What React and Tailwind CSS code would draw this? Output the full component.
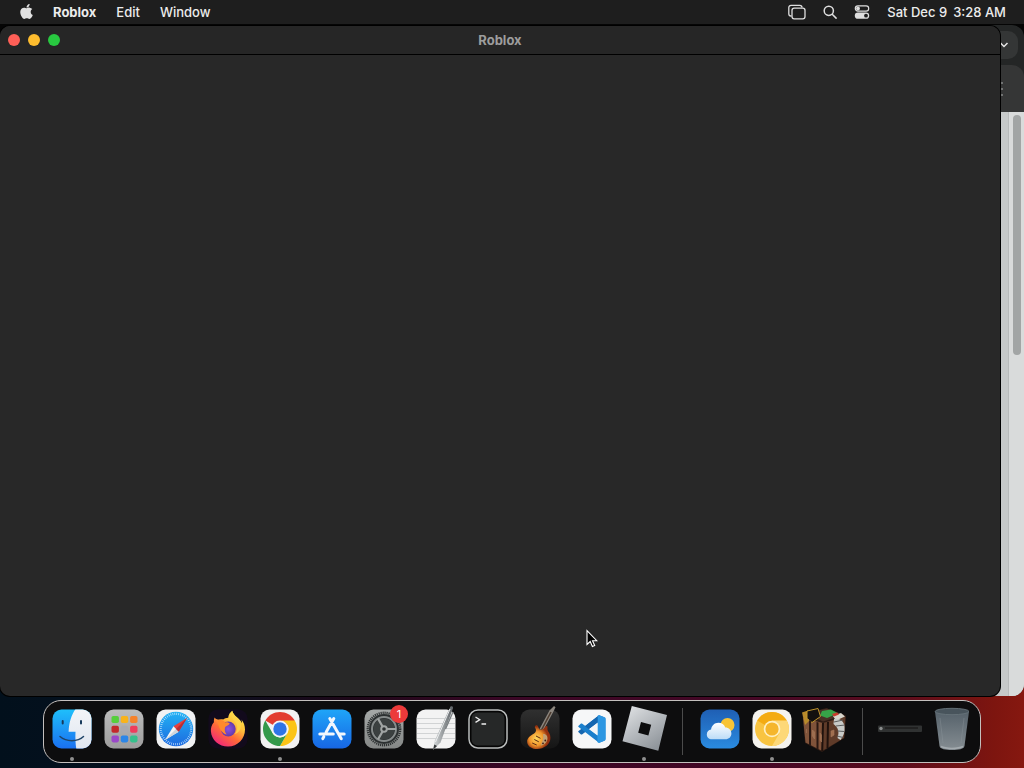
import React from "react";
import { FaApple } from "react-icons/fa";

function Glyph({ children }) {
  return (
    <svg viewBox="0 0 40 40" className="block size-10 overflow-visible" aria-hidden="true">
      {children}
    </svg>
  );
}

const Tile = ({ fill, ...rest }) => <rect x="0.5" y="0.5" width="39" height="39" rx="9" fill={fill} {...rest} />;

function Gradient({ id, from, to, x2 = 0, y2 = 1 }) {
  return (
    <linearGradient id={id} x1="0" y1="0" x2={x2} y2={y2}>
      <stop offset="0" stopColor={from} />
      <stop offset="1" stopColor={to} />
    </linearGradient>
  );
}

function FinderIcon() {
  return (
    <Glyph>
      <defs>
        <Gradient id="finder-l" from="#1fc0fb" to="#1a6ff0" />
        <Gradient id="finder-r" from="#f3f5f8" to="#dfe6f0" />
        <clipPath id="finder-c"><rect x="0.5" y="0.5" width="39" height="39" rx="9" /></clipPath>
      </defs>
      <g clipPath="url(#finder-c)">
        <rect width="40" height="40" fill="url(#finder-l)" />
        <path d="M23.500 0C19.500 6 17 13 16.600 22.800h6.900c-.3 6 0 12 .8 17.200H40V0Z" fill="url(#finder-r)" />
      </g>
      <path d="M10.700 12v2.600M29 12v2.600" stroke="#173a5c" strokeWidth="2" strokeLinecap="round" />
      <path d="M8 27.500c6.500 5.500 17.500 5.500 23.500 0" stroke="#1f4468" strokeWidth="1.500" fill="none" strokeLinecap="round" />
    </Glyph>
  );
}

const launchpadColors = ["#55cf3c", "#f8b31c", "#f5822a", "#c3282c", "#a9a9ae", "#ee3d5c", "#9a48c8", "#2b86e8", "#35c08c"];

function LaunchpadIcon() {
  return (
    <Glyph>
      <defs><Gradient id="lp" from="#bcbcbc" to="#9d9d9d" /></defs>
      <Tile fill="url(#lp)" />
      {launchpadColors.map((color, i) => (
        <rect key={color} x={7.500 + (i % 3) * 9.300} y={7 + Math.floor(i / 3) * 9.700} width="7.400" height="7" rx="1.800" fill={color} />
      ))}
    </Glyph>
  );
}

function SafariIcon() {
  return (
    <Glyph>
      <defs><Gradient id="saf" from="#22b2f4" to="#1d6ae0" /></defs>
      <Tile fill="#f1f2f3" />
      <circle cx="20" cy="20" r="17.200" fill="url(#saf)" />
      <circle cx="20" cy="20" r="15.200" fill="none" stroke="#d8efff" strokeWidth="2.200" strokeDasharray="0.6 1.390" />
      <path d="M31 9 17.500 17.300l5.200 5.400Z" fill="#e8403c" />
      <path d="M9 31 17.500 17.300l5.200 5.400Z" fill="#f5f5f5" />
      <path d="m9 31 11-11 2.700 2.700Z" fill="#cfd6dc" />
      <path d="m31 9-11 11 2.700 2.700Z" fill="#b92e34" />
    </Glyph>
  );
}

function FirefoxIcon() {
  return (
    <Glyph>
      <defs>
        <linearGradient id="ff" x1="0.9" y1="0.050" x2="0.25" y2="1">
          <stop offset="0" stopColor="#fff04c" />
          <stop offset="0.35" stopColor="#ffbd3a" />
          <stop offset="0.62" stopColor="#ff6b36" />
          <stop offset="1" stopColor="#f0247c" />
        </linearGradient>
        <radialGradient id="ffp"><stop offset="0" stopColor="#8a52e4" /><stop offset="1" stopColor="#643aa8" /></radialGradient>
      </defs>
      <Tile fill="#120a1c" />
      <path d="M6.500 8.500c-.6 1.600-.8 3.200-.6 4.800C3.500 15.800 2.800 19 2.900 22.300 3.400 31 11 37.600 20 37.600c9.800 0 17-7.600 17-17 0-4-1.300-7.500-3.600-10.200.5 1.600.7 2.600.7 3.800-2.600-5.700-8.300-6.600-9.900-12.400-2.400 1.700-3.700 4.100-4 6.900-2 .1-3.600.7-5 1.800-1.600-.5-3.500-.4-5 .2-1.500-.4-2.900-1-3.700-2.200Z" fill="url(#ff)" />
      <circle cx="20.300" cy="20" r="7.400" fill="url(#ffp)" />
      <path d="M10.200 10.700c3.200-.3 5.500.7 7 2.700 2.200-.4 3.700.2 4.500 1.300-.8 1.700-3.500 1.900-4.500 3.200-.9 2.600-.4 5.300 1.500 7.600-5-.7-9.500-8.500-8.500-14.800Z" fill="#ff8a2c" />
      <path d="M24.200 1.800c-2.200 4.600.3 7.800 2.800 10.700 3.400 4 2.700 9.400-.4 12.600 4.800-1.400 7.300-6.300 6-11.200-2.200-4.800-7-6.800-8.400-12.100Z" fill="#ffd44a" opacity="0.85" />
    </Glyph>
  );
}

function ChromeIcon() {
  return (
    <Glyph>
      <Tile fill="#f2f2f2" />
      <path d="M20 20 5.280 11.500A17 17 0 0 1 34.720 11.500Z" fill="#e23c30" />
      <path d="M20 11.500h14.720A17 17 0 0 1 20 37l7.360-12.750A8.500 8.500 0 0 0 20 11.500Z" fill="#fbc417" />
      <path d="M5.280 11.500 12.640 24.250A8.500 8.500 0 0 0 27.360 24.250L20 37A17 17 0 0 1 5.280 11.500Z" fill="#34994a" />
      <circle cx="20" cy="20" r="8.500" fill="#f4f4f4" />
      <circle cx="20" cy="20" r="6.700" fill="#2f74e6" />
    </Glyph>
  );
}

function AppStoreIcon() {
  return (
    <Glyph>
      <defs><Gradient id="as" from="#1fa5f8" to="#1766e4" /></defs>
      <Tile fill="url(#as)" />
      <g stroke="#f2f7fd" strokeWidth="3" strokeLinecap="round" fill="none">
        <path d="M21.800 9.500 14.200 23M11.800 27.800l-1 1.800M17.800 9.500l11.500 20.200M7.800 25h13.500M27.500 25h4.700" />
      </g>
    </Glyph>
  );
}

function SettingsIcon() {
  return (
    <Glyph>
      <defs><Gradient id="set" from="#a6a9a8" to="#858887" /></defs>
      <Tile fill="url(#set)" />
      <circle cx="20" cy="20" r="16.200" fill="none" stroke="#2e3233" strokeWidth="2.400" strokeDasharray="1.200 0.810" />
      <circle cx="20" cy="20" r="15" fill="#2c3031" />
      <circle cx="20" cy="20" r="12" fill="none" stroke="#868b8b" strokeWidth="2" />
      <circle cx="20" cy="20" r="10.500" fill="#3b4040" />
      <g stroke="#a0a4a3" strokeWidth="2.200">
        <path d="M20 20H32M20 20 14 9.600M20 20 14 30.400" />
      </g>
      <circle cx="20" cy="20" r="3.800" fill="#a0a4a3" />
      <circle cx="20" cy="20" r="1.800" fill="#2c3031" />
    </Glyph>
  );
}

function TextEditIcon() {
  return (
    <Glyph>
      <defs><Gradient id="pen" from="#d6dadb" to="#5b6064" x2={1} y2={0} /></defs>
      <Tile fill="#f3f3f3" />
      <path d="M1 9.500h38M1 14.500h38M1 19.500h38M1 24.500h38M1 29.500h38" stroke="#c8cacc" strokeWidth="0.800" />
      <path d="M34.500-2.500c1.700-.8 2.800 0 2.500 1.700L24.500 33.500 17 41l1.800-9.500Z" fill="url(#pen)" />
      <path d="m34 0-14.500 33" stroke="#eceeef" strokeWidth="1" />
      <path d="m37 3-7.500 17" stroke="#787d80" strokeWidth="1.300" />
      <path d="m18.300 35.500-1.300 5.500 4-4Z" fill="#35383a" />
    </Glyph>
  );
}

function TerminalIcon() {
  return (
    <Glyph>
      <rect x="1" y="1" width="38" height="38" rx="9" fill="#050505" stroke="#b9bcbc" strokeWidth="1.500" />
      <rect x="3.500" y="3.500" width="33" height="33" rx="6" fill="#262828" />
      <path d="m7.500 8 4.300 2.700-4.300 2.700M13.500 15h4.600" stroke="#f0f0f0" strokeWidth="1.300" fill="none" />
    </Glyph>
  );
}

function GuitarIcon() {
  return (
    <Glyph>
      <defs>
        <radialGradient id="gb" cx="0.4" cy="0.55"><stop offset="0" stopColor="#ffd85c" /><stop offset="0.6" stopColor="#f0962c" /><stop offset="1" stopColor="#94300f" /></radialGradient>
        <Gradient id="gbb" from="#303030" to="#151515" />
      </defs>
      <Tile fill="url(#gbb)" />
      <path d="M29.500 1.500 34-3l1.500 1.200-2.300 4.800L23 22l-3.500-2Z" fill="#8d877f" />
      <path d="m31 3-9.500 18" stroke="#4d3c30" strokeWidth="1.600" />
      <path d="M15.500 19.500c-1.200-1.300-.7-3 .8-3.200 2.200-.2 1.700 3 3.600 4.200 1.800.9 3.700-.6 5.400-2.800 1.100-1.300 2.500-.7 2.200 1-.4 2.300.5 3.500 1.700 5.300 3.300 6.300-.2 12.600-7.200 15.300-6.500 2.300-14-.4-14.800-5.800-.8-5.600 5.500-7.500 8-10 1-1.300 1-2.700.3-4Z" fill="url(#gb)" />
      <path d="M23 25c2.800-.4 5 2 4.300 5.500-.7 3.300-3.500 5.600-6.300 6 .4-3.500 3-5 2-11.500Z" fill="#c2a175" />
      <path d="m16 27 4.500 2.300M14.300 30.500l4.500 2.300M12.200 34l4.500 2" stroke="#5b2c14" strokeWidth="1" />
      <circle cx="25.300" cy="31.500" r="0.900" fill="#3b1c10" />
      <circle cx="23" cy="34.300" r="0.900" fill="#3b1c10" />
    </Glyph>
  );
}

function CodeIcon() {
  return (
    <Glyph>
      <Tile fill="#f6f7f8" />
      <path d="m6.600 23.300 2.100 1.900c.5.400 1.100.4 1.600.1L33 8.500 27 6.300 6.600 22c-.5.400-.5 1 0 1.300Z" fill="#1566b0" />
      <path d="m6.600 16.700 2.100-1.900c.5-.4 1.100-.4 1.600-.1L33 31.500l-6 2.200L6.600 18c-.5-.4-.5-1 0-1.300Z" fill="#1b7fcc" />
      <path d="M26 33.500c-.7-.3-.6-.8-.6-1.500V8c0-.7 0-1.200.7-1.500l.9-.4 6 2.500c.5.300.8.700.8 1.300v20.200c0 .6-.3 1-.8 1.300l-6 2.500Z" fill="#2d97e2" />
      <path d="M25.500 13.500 16.800 20l8.700 6.500Z" fill="#f6f7f8" />
      <path d="M25.500 7.500v6L16.800 20 13 17.200Z" fill="#1566b0" />
    </Glyph>
  );
}

function RobloxIcon() {
  return (
    <Glyph>
      <defs><Gradient id="rb" from="#e4e6e8" to="#8e949a" x2={0.7} /></defs>
      <path fillRule="evenodd" d="M7.800-3 43 6 34.300 41.800-1.500 32.300ZM17 13l-2.800 10.700 10.200 2.700 2.800-10.700Z" fill="url(#rb)" />
    </Glyph>
  );
}

function WeatherIcon() {
  return (
    <Glyph>
      <defs>
        <Gradient id="we" from="#1f5fb4" to="#2a8be0" />
        <Gradient id="cl" from="#ffffff" to="#bcdcf7" />
      </defs>
      <Tile fill="url(#we)" />
      <circle cx="27.500" cy="16" r="7" fill="#f8c435" />
      <path d="M12 30.300c-3.200 0-5.200-2.200-5.200-4.900 0-2.600 1.900-4.600 4.300-4.900.5-4 3.400-6.800 7.300-6.800 3.300 0 5.900 1.900 6.900 4.900 3.500 0 6.100 2.500 6.100 5.900 0 3.300-2.600 5.800-5.900 5.800Z" fill="url(#cl)" />
    </Glyph>
  );
}

function CanaryIcon() {
  return (
    <Glyph>
      <Tile fill="#f5f3ee" />
      <circle cx="20" cy="20" r="17" fill="#f9c441" />
      <path d="M20 20 5.280 11.500A17 17 0 0 1 34.720 11.500Z" fill="#f4ab12" />
      <path d="M20 11.500h14.720A17 17 0 0 1 20 37l7.360-12.750Z" fill="#fdd878" />
      <circle cx="20" cy="20" r="8.300" fill="#fff0c2" />
      <circle cx="20" cy="20" r="6.600" fill="#f5b62c" />
    </Glyph>
  );
}

function CraftingIcon() {
  return (
    <Glyph>
      <path d="M-1.500 5.500 22-1 42 6.500 40.500 29 18 43 1 34Z" fill="#2d1b14" />
      <path d="M-1 9 19 14l-.8 28L1.500 33.500Z" fill="#80533a" />
      <path d="M19 14 41.500 7.500 40 29 18.200 42Z" fill="#5f3b29" />
      <path d="M2 4 23-.5 40 6 19 12.500Z" fill="#493126" />
      <path d="m18 2 9-1.500 7 4-11 4.500-7-2.500Z" fill="#36a348" />
      <path d="m29 7 8-3 4 3.500-9 4Z" fill="#d8d6cc" />
      <path d="m28 5 5-1.500 2 2-5 2Z" fill="#c93b2c" />
      <path d="M-2 3.500 4 1.500 5 12l-4 4Z" fill="#b88a2b" />
      <path d="m3 2 11-2.500 2.500 8-8.500 6-5-4Z" fill="#13100f" stroke="#c2962d" strokeWidth="1" />
      <path d="m5 11 2 1v25l-2-1ZM12.500 13l2 .5v27l-2-1Z" fill="#2a1812" />
      <path d="m19 14-.8 28M24 13l-.5 26" stroke="#20120d" strokeWidth="2" />
      <path d="M30 10c6-1 10 2 10.500 8 .5 5-1 9-4 13l-3-2c2-6 1-10-4-14Z" fill="#c8cac8" />
      <path d="m30 13 9-2M32 17l9-1M33.500 22l7 .5M33 27l6 1.500" stroke="#5c5e5e" strokeWidth="1" />
      <path d="M8.500 21v6l2 3v-7ZM16 24v7l1.500 2v-7ZM27 22l3-1v5l-3 2ZM2.500 20v4" stroke="#a5775a" strokeWidth="0.600" fill="#a06e4e" />
    </Glyph>
  );
}

function MinimizedWindowIcon() {
  return (
    <Glyph>
      <rect x="-2" y="16.500" width="44" height="6.500" rx="1" fill="#303232" />
      <path d="M5 19h33" stroke="#1c1d1d" strokeWidth="1.500" />
      <circle cx="1" cy="19.500" r="1.700" fill="#8b8e8e" />
    </Glyph>
  );
}

function TrashIcon() {
  return (
    <Glyph>
      <defs><Gradient id="tr" from="#55616a" to="#858d92" /></defs>
      <path d="M3 2.500 7.500 37c.4 3 6 4 12.500 4s12-1 12.500-4L37 2.500Z" fill="url(#tr)" />
      <ellipse cx="20" cy="2.500" rx="17" ry="3.200" fill="#48545c" stroke="#68747b" strokeWidth="0.900" />
      <path d="M9 37.500c5 2.500 17 2.500 22 0" stroke="#a4abaf" strokeWidth="1.400" fill="none" />
      <path d="m8 9 3 25M32 9l-3 25" stroke="#909a9f" strokeWidth="0.700" opacity="0.5" />
    </Glyph>
  );
}

const dockGroups = [
  [
    { name: "Finder", Icon: FinderIcon, running: true },
    { name: "Launchpad", Icon: LaunchpadIcon },
    { name: "Safari", Icon: SafariIcon },
    { name: "Firefox", Icon: FirefoxIcon },
    { name: "Google Chrome", Icon: ChromeIcon, running: true },
    { name: "App Store", Icon: AppStoreIcon },
    { name: "System Settings", Icon: SettingsIcon, badge: 1 },
    { name: "TextEdit", Icon: TextEditIcon },
    { name: "Terminal", Icon: TerminalIcon },
    { name: "GarageBand", Icon: GuitarIcon },
    { name: "Visual Studio Code", Icon: CodeIcon },
    { name: "Roblox", Icon: RobloxIcon, running: true },
  ],
  [
    { name: "Weather", Icon: WeatherIcon },
    { name: "Chrome Canary", Icon: CanaryIcon, running: true },
    { name: "Minecraft", Icon: CraftingIcon },
  ],
  [
    { name: "Minimized window", Icon: MinimizedWindowIcon },
    { name: "Trash", Icon: TrashIcon },
  ],
];

function DockItem({ name, Icon, running, badge }) {
  return (
    <button type="button" aria-label={name} className="flex w-13 flex-col items-center gap-2 pt-2">
      <span className="relative block">
        <Icon />
        {badge && (
          <span className="absolute -top-1 -right-1 flex size-[18px] items-center justify-center rounded-full bg-[#ec3a3a] text-[11px] leading-none text-white">
            {badge}
          </span>
        )}
      </span>
      <span className={running ? "size-1 rounded-full bg-[#8f8f8f]" : "size-1"} />
    </button>
  );
}

function Dock() {
  return (
    <nav aria-label="Dock" className="flex justify-center pt-1 pb-[5px]">
      <div className="flex h-[63px] rounded-[18px] border border-[#c4c0be] bg-[#0d0d0e] px-[2px]">
        {dockGroups.map((group, i) => (
          <div key={group[0].name} className="flex">
            {i > 0 && (
              <div className="flex w-6 justify-center py-[7px]">
                <div className="w-px bg-[#4b4b4b]" />
              </div>
            )}
            {group.map((item) => (
              <DockItem key={item.name} {...item} />
            ))}
          </div>
        ))}
      </div>
    </nav>
  );
}

function MenuBar() {
  return (
    <header className="flex h-6 items-center justify-between bg-[#1e1e1e] pr-[18px] pb-px pl-[18px] text-[13px] leading-4 text-[#ececec]">
      <nav aria-label="Menu bar" className="flex items-center gap-[18px]">
        <button type="button" aria-label="Apple menu">
          <FaApple className="size-[17px] text-[#e2e2e2]" />
        </button>
        <div className="flex gap-5">
          <button type="button" className="font-bold">Roblox</button>
          <button type="button" className="font-medium">Edit</button>
          <button type="button" className="font-medium">Window</button>
        </div>
      </nav>
      <div className="flex items-center gap-[17px]">
        <button type="button" aria-label="Stage Manager">
          <svg viewBox="0 0 18 16" className="h-4 w-[18px]" fill="none" stroke="#dedede" strokeWidth="1.300">
            <path d="M3.500 12H3a2.200 2.200 0 0 1-2.200-2.200V3.500A2.200 2.200 0 0 1 3 1.300h8.800A2.200 2.200 0 0 1 14 3.500" />
            <rect x="4" y="4.200" width="13" height="10.600" rx="2.200" />
          </svg>
        </button>
        <button type="button" aria-label="Search">
          <svg viewBox="0 0 14 14" className="size-[14px]" fill="none" stroke="#dedede" strokeWidth="1.500" strokeLinecap="round">
            <circle cx="5.800" cy="5.800" r="4.600" />
            <path d="m9.200 9.200 3.900 3.900" />
          </svg>
        </button>
        <button type="button" aria-label="Control Center">
          <svg viewBox="0 0 16 14" className="h-[14px] w-4">
            <rect x="1.300" y="0.900" width="13.400" height="5.200" rx="2.600" fill="none" stroke="#dedede" strokeWidth="1.200" />
            <circle cx="4" cy="3.500" r="1.900" fill="#dedede" />
            <rect x="0.800" y="7.600" width="14.400" height="6.200" rx="3.100" fill="#dedede" />
            <circle cx="12" cy="10.700" r="1.900" fill="#1e1e1e" />
          </svg>
        </button>
        <button type="button" className="flex gap-[6px] font-medium whitespace-nowrap">
          <span>Sat Dec 9</span>
          <span>3:28 AM</span>
        </button>
      </div>
    </header>
  );
}

function BrowserWindow() {
  return (
    <section aria-label="Browser" className="absolute inset-x-0 top-px bottom-0 flex flex-col overflow-hidden rounded-xl bg-[#242626]">
      <div className="flex h-10 items-center justify-end px-[6px]">
        <button type="button" aria-label="Search tabs" className="flex size-7 items-center justify-center rounded-[10px] bg-[#343636]">
          <svg viewBox="0 0 10 10" className="size-[10px]" fill="none" stroke="#e8e8e8" strokeWidth="1.500">
            <path d="m1.500 3 3.500 3.500L8.500 3" />
          </svg>
        </button>
      </div>
      <div className="flex h-[47px] items-center justify-end rounded-t-xl bg-[#353636] pr-[21px]">
        <button type="button" aria-label="Browser menu" className="flex flex-col gap-1">
          <span className="size-[2px] bg-[#707272]" />
          <span className="size-[2px] bg-[#707272]" />
          <span className="size-[2px] bg-[#707272]" />
        </button>
      </div>
      <div className="flex flex-1 justify-end bg-[#c6c9c9]">
        <div className="w-4 border-l border-[#b8bbbb] bg-[#d9dbdb] pt-[3px] pr-[3px] pl-1">
          <div className="h-60 rounded-full bg-[#a2a5a5]" />
        </div>
      </div>
    </section>
  );
}

function RobloxWindow() {
  return (
    <section aria-label="Roblox" className="relative mt-[2px] mr-6 flex flex-1 flex-col overflow-hidden rounded-[10px] bg-[#282828] shadow-[0_0_0_1px_#000]">
      <div className="grid h-[29px] grid-cols-[1fr_auto_1fr] items-center border-b border-black bg-[#262626] px-2">
        <div className="flex gap-2">
          <button type="button" aria-label="Close" className="size-3 rounded-full bg-[#fe5f57]" />
          <button type="button" aria-label="Minimize" className="size-3 rounded-full bg-[#fdbc2e]" />
          <button type="button" aria-label="Zoom" className="size-3 rounded-full bg-[#28c840]" />
        </div>
        <h1 className="text-[13px] leading-4 font-bold text-[#9d9d9d]">Roblox</h1>
      </div>
    </section>
  );
}

function Cursor() {
  return (
    <svg viewBox="0 0 12 19" className="absolute top-[629px] left-[586px] h-[19px] w-3" aria-hidden="true">
      <path d="M1 1.500v14l3.200-3 2.200 5 2.300-1-2.200-4.800h4.300Z" fill="#000" stroke="#fff" strokeWidth="1.100" />
    </svg>
  );
}

export default function App() {
  return (
    <div className="relative flex min-h-screen flex-col overflow-hidden bg-[linear-gradient(90deg,#02101c_0%,#06101f_18%,#1d0718_34%,#3a0625_50%,#460725_75%,#5c0c1c_88%,#7d150f_97%,#861810_100%)] font-[Inter,'Liberation_Sans',sans-serif]">
      <MenuBar />
      <main className="relative flex flex-1 bg-[linear-gradient(to_bottom,#050505_50%,transparent_50%)]">
        <BrowserWindow />
        <RobloxWindow />
      </main>
      <Dock />
      <Cursor />
    </div>
  );
}
